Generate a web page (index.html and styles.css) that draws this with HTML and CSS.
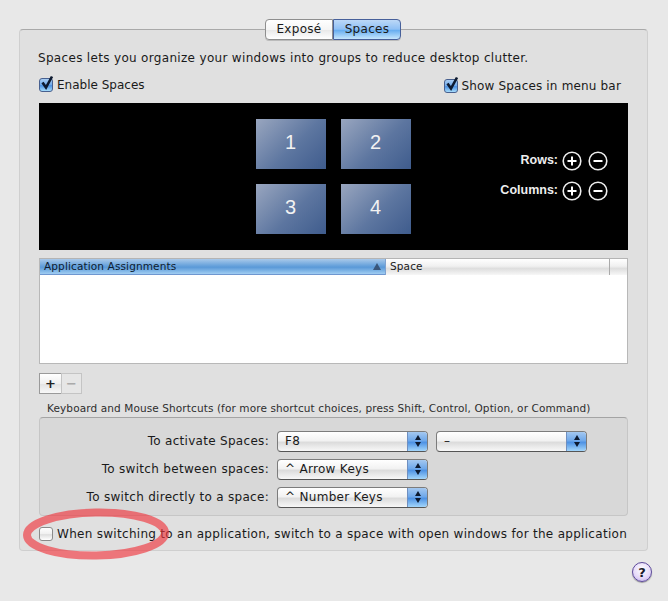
FILE: index.html
```html
<!DOCTYPE html>
<html lang="en">
<head>
<meta charset="utf-8">
<title>Spaces</title>
<link rel="stylesheet" href="styles.css">
</head>
<body>
<div class="window">
  <div class="tabs">
    <div class="tab">Exposé</div>
    <div class="tab tab-on">Spaces</div>
  </div>
  <div class="panel">
    <p class="intro">Spaces lets you organize your windows into groups to reduce desktop clutter.</p>
    <div class="check-row">
      <label class="check"><span class="box box-on"><svg viewBox="0 0 16 16" width="16" height="16"><path d="M3.5 7.5 L7 12.5 L13 1.5" fill="none" stroke="#0d1a30" stroke-width="2.6"/></svg></span>Enable Spaces</label>
      <label class="check check-right"><span class="box box-on"><svg viewBox="0 0 16 16" width="16" height="16"><path d="M3.5 7.5 L7 12.5 L13 1.5" fill="none" stroke="#0d1a30" stroke-width="2.6"/></svg></span>Show Spaces in menu bar</label>
    </div>
    <div class="stage">
      <div class="tiles">
        <div class="tile">1</div>
        <div class="tile">2</div>
        <div class="tile">3</div>
        <div class="tile">4</div>
      </div>
      <div class="steppers">
        <div class="stepper"><span class="stepper-label">Rows:</span>
          <svg class="round" viewBox="0 0 20 20"><circle cx="10" cy="10" r="8.8"/><path d="M5.5 10H14.5M10 5.5V14.5"/></svg>
          <svg class="round" viewBox="0 0 20 20"><circle cx="10" cy="10" r="8.8"/><path d="M5.5 10H14.5"/></svg>
        </div>
        <div class="stepper"><span class="stepper-label">Columns:</span>
          <svg class="round" viewBox="0 0 20 20"><circle cx="10" cy="10" r="8.8"/><path d="M5.5 10H14.5M10 5.5V14.5"/></svg>
          <svg class="round" viewBox="0 0 20 20"><circle cx="10" cy="10" r="8.8"/><path d="M5.5 10H14.5"/></svg>
        </div>
      </div>
    </div>
    <div class="table">
      <div class="thead">
        <div class="th th-app"><span>Application Assignments</span><i class="sort"></i></div>
        <div class="th th-space">Space</div>
        <div class="th th-end"></div>
      </div>
      <div class="tbody"></div>
    </div>
    <div class="addrem">
      <div class="ar ar-add">+</div>
      <div class="ar ar-rem">−</div>
    </div>
    <div class="group-title">Keyboard and Mouse Shortcuts (for more shortcut choices, press Shift, Control, Option, or Command)</div>
    <div class="group">
      <div class="form-row">
        <span class="form-label">To activate Spaces:</span>
        <div class="select"><span class="select-text">F8</span><span class="arrows"><i class="up"></i><i class="down"></i></span></div>
        <div class="select"><span class="select-text">–</span><span class="arrows"><i class="up"></i><i class="down"></i></span></div>
      </div>
      <div class="form-row">
        <span class="form-label">To switch between spaces:</span>
        <div class="select"><span class="select-text">^ Arrow Keys</span><span class="arrows"><i class="up"></i><i class="down"></i></span></div>
      </div>
      <div class="form-row">
        <span class="form-label">To switch directly to a space:</span>
        <div class="select"><span class="select-text">^ Number Keys</span><span class="arrows"><i class="up"></i><i class="down"></i></span></div>
      </div>
    </div>
    <label class="check check-bottom"><span class="box"></span>When switching to an application, switch to a space with open windows for the application</label>
  </div>
  <div class="help-row"><div class="help">?</div></div>
  <svg class="ring" viewBox="0 0 160 60" width="160" height="60"><ellipse cx="80" cy="30" rx="69" ry="21.5" transform="rotate(-1 80 30)" fill="none" stroke="#f0343c" stroke-opacity=".64" stroke-width="8"/></svg>
</div>
</body>
</html>
```
FILE: styles.css
```css
* { box-sizing: border-box; }
html, body { margin: 0; height: 100%; }
body {
  background: #e8e8e8;
  font-family: "DejaVu Sans", sans-serif;
  font-size: 12px;
  color: #1a1a1a;
  overflow: hidden;
}
.window { position: relative; width: 668px; height: 601px; padding: 19px 20px 0 19px; }

.tabs { position: relative; z-index: 1; display: flex; justify-content: center; height: 21px; margin: 0 1px -11px 0; }
.tab {
  width: 68px; height: 21px; line-height: 19px; text-align: center; font-size: 12px; letter-spacing: .3px;
  border: 1px solid #8e8e8e; border-radius: 4px 0 0 4px;
  background: linear-gradient(#fff, #f5f5f5 50%, #e9e9e9 55%, #fff);
  box-shadow: 0 1px 0 #bbb;
}
.tab-on {
  border: 1px solid #47609a; border-radius: 0 4px 4px 0;
  background: linear-gradient(#bcd8f7, #8fc0f5 48%, #69aef0 55%, #c5e6fd);
}

.panel {
  height: 522px; padding: 0 19px;
  background: #e0e0e0; border: 1px solid #cfcfcf; border-top-color: #a9a9a9; border-radius: 4px;
}
.intro { margin: 21px 0 0 -1px; height: 15px; line-height: 15px; font-size: 12px; letter-spacing: .32px; white-space: nowrap; }
.check-row { display: flex; justify-content: space-between; margin-top: 11px; height: 16px; padding-right: 7px; }
.check { display: flex; align-items: center; gap: 4px; line-height: 16px; white-space: nowrap; }
.check-right { margin-top: 1px; letter-spacing: .17px; }
.box {
  position: relative; flex: none; display: block; width: 14px; height: 14px;
  border: 1px solid #8a8a8a; border-radius: 3px;
  background: linear-gradient(#fff, #f0f0f0 50%, #dfdfdf 55%, #fff);
}
.box-on { border-color: #48608f; background: linear-gradient(#a9cdf3, #6fa9ea 50%, #4d92e3 55%, #a6dcfb); }
.box svg { position: absolute; left: -1px; top: -4px; }

.stage { display: flex; margin-top: 10px; width: 589px; height: 147px; background: #000; }
.tiles { display: grid; grid-template-columns: 70px 70px; grid-auto-rows: 50px; gap: 15px; margin: 16px 0 0 217px; }
.tile {
  display: flex; align-items: center; justify-content: center; padding: 0 1px 3px 0;
  font-family: "Liberation Sans", sans-serif; font-size: 20px; color: #f2f2f2;
  background: linear-gradient(135deg, #99a6bf, #5d76a0 55%, #3f5c8d);
}
.steppers { margin: 48px 0 0 auto; padding-right: 20px; display: flex; flex-direction: column; gap: 10px; }
.stepper { display: flex; align-items: center; justify-content: flex-end; gap: 6px; height: 20px; }
.stepper-label { font-family: "Liberation Sans", sans-serif; font-weight: bold; font-size: 12.5px; color: #eee; margin: -2px -2px 0 0; }
.round { width: 20px; height: 20px; }
.round circle { fill: #000; stroke: #eee; stroke-width: 1.6; }
.round path { fill: none; stroke: #fff; stroke-width: 2; }

.table { margin-top: 8px; width: 589px; height: 106px; background: #fff; border: 1px solid #b8b8b8; border-top: 1px solid #b4b4b4; display: flex; flex-direction: column; }
.thead { display: flex; height: 16px; flex: none; border-bottom: 1px solid #aaa; font-size: 10.5px; line-height: 15px; letter-spacing: .13px; }
.th { height: 16px; }
.th-app {
  width: 345px; display: flex; justify-content: space-between; padding: 0 4px 0 4px; color: #0e1c30;
  background: linear-gradient(#a9c9ea, #6ea6dd 40%, #5a99d8 55%, #a0cdf2); border-bottom: 1px solid #6f97d0;
}
.sort { align-self: center; width: 0; height: 0; border: 4.5px solid transparent; border-top: 0; border-bottom: 7px solid #39567a; }
.th-space { flex: 1; padding-left: 4px; border-left: 1px solid #7fa2d0; background: linear-gradient(#fff, #f0f0f0 45%, #dedede 60%, #f7f7f7); }
.th-end { width: 18px; border-left: 1px solid #aaa; background: linear-gradient(#fff, #f0f0f0 45%, #dedede 60%, #f7f7f7); }
.tbody { flex: 1; }

.addrem { display: flex; margin-top: 9px; height: 21px; }
.ar { display: flex; align-items: center; justify-content: center; height: 21px; font-weight: bold; font-size: 13px; line-height: 1; border: 1px solid #9a9a9a; }
.ar-add { width: 23px; color: #222; background: linear-gradient(#fff, #f0f0f0 50%, #e4e4e4 55%, #f8f8f8); }
.ar-rem { width: 21px; margin-left: -1px; color: #aaa; border-color: #c4c4c4; background: #e6e6e6; }

.group-title { margin: 8px 0 0 8px; height: 13px; line-height: 13px; font-size: 10.5px; letter-spacing: .11px; color: #2e2e2e; white-space: nowrap; }
.group { margin-top: 2px; width: 589px; height: 99px; padding-top: 12px; background: #d8d8d8; border: 1px solid #c6c6c6; border-top-color: #a4a4a4; border-radius: 4px; }
.form-row { display: flex; align-items: center; height: 22px; margin-bottom: 6px; letter-spacing: .3px; }
.form-label { width: 229px; text-align: right; white-space: nowrap; }
.select {
  position: relative; display: flex; align-items: center; width: 151px; height: 21px; margin-left: 8px;
  border: 1px solid #7c7c7c; border-bottom-color: #555; border-radius: 4px; overflow: hidden;
  background: linear-gradient(#fff, #f2f2f2 45%, #dcdcdc 55%, #f8f8f8);
}
.select-text { padding-left: 7px; white-space: nowrap; }
.arrows {
  position: absolute; right: 0; top: 0; bottom: 0; width: 20px;
  display: flex; flex-direction: column; align-items: center; justify-content: center; gap: 2px;
  background: linear-gradient(#a4c8f0, #6fa8ea 45%, #4f93e4 55%, #a3d6fb); border-left: 1px solid #6f8fc0;
}
.up, .down { display: block; width: 0; height: 0; border: 3.5px solid transparent; }
.up { border-top: 0; border-bottom: 5px solid #0d1a30; }
.down { border-bottom: 0; border-top: 5px solid #0d1a30; }

.check-bottom { margin-top: 10px; letter-spacing: .29px; }

.help-row { display: flex; justify-content: flex-end; margin: 11px -4px 0 0; }
.help {
  display: flex; align-items: center; justify-content: center; width: 20px; height: 20px; border-radius: 50%;
  font-weight: bold; font-size: 13px; color: #1a1a2a; border: 1px solid #5c4a9a;
  background: radial-gradient(circle at 50% 35%, #fff, #e4d8f8 60%, #b9a4e8);
  box-shadow: 0 1px 1px #999;
}
.ring { position: absolute; left: 16px; top: 504px; pointer-events: none; }
```
